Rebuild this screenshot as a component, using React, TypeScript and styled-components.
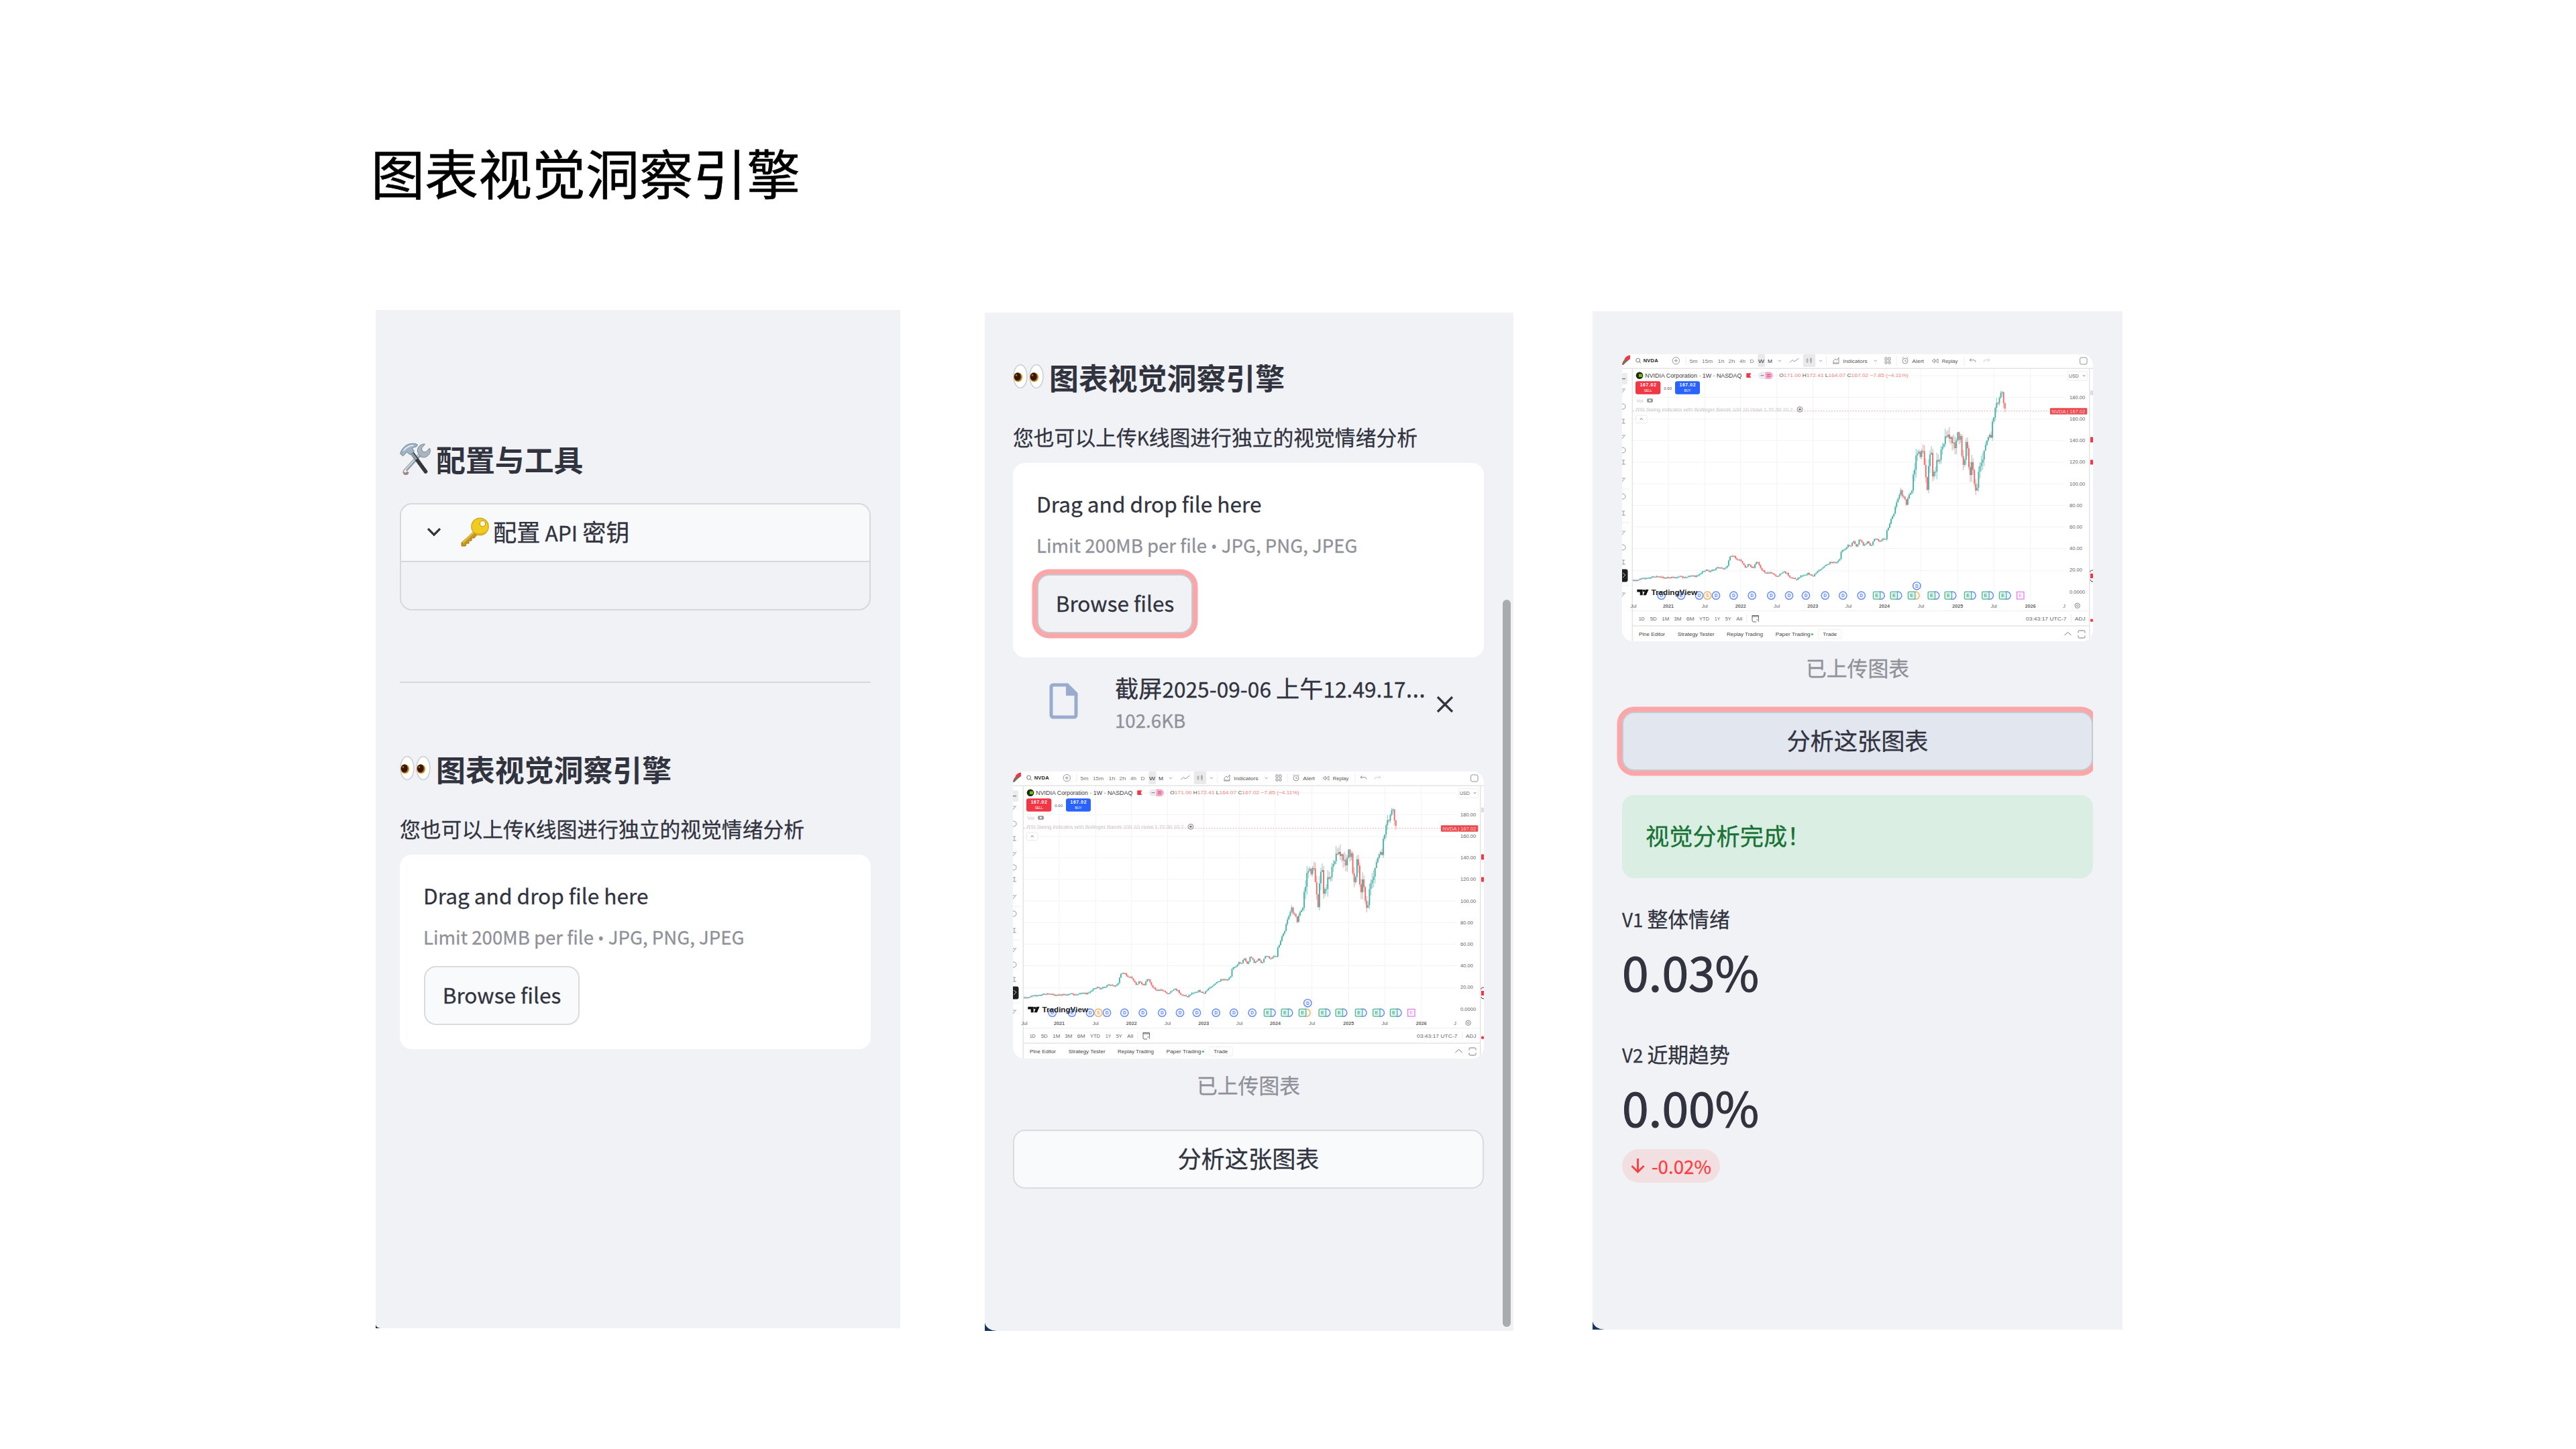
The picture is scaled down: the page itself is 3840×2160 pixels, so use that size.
import React from 'react';
import styled, { createGlobalStyle, css } from 'styled-components';

const GlobalStyle = createGlobalStyle`
  * { box-sizing: border-box; }
  body { margin: 0; background: #ffffff; }
`;

const ink = '#31333f';
const muted = '#909198';
const line = '#d6d8dc';

const Page = styled.main`
  width: 3840px;
  height: 2160px;
  padding-top: 215px;
  background: #ffffff;
  color: ${ink};
  font-family: 'Noto Sans CJK SC', 'Noto Sans', sans-serif;
  overflow: hidden;
`;

const Title = styled.h1`
  margin: 0 0 0 553px;
  height: 80px;
  line-height: 80px;
  font-size: 80px;
  font-weight: 400;
  color: #000000;
  -webkit-text-stroke: 0.6px #000000;
`;

const Panels = styled.div`
  display: flex;
  align-items: flex-start;
  padding: 167px 0 0 560px;
`;

const Panel = styled.section<{ $w: number; $h: number; $top: number; $gap: number; $pad: string }>`
  position: relative;
  flex: none;
  display: flex;
  flex-direction: column;
  width: ${p => p.$w}px;
  height: ${p => p.$h}px;
  margin-top: ${p => p.$top}px;
  margin-left: ${p => p.$gap}px;
  padding: ${p => p.$pad};
  background: #f0f2f6;
  -webkit-text-stroke: 0.3px currentColor;
`;

const Heading = styled.h2<{ $top?: number }>`
  display: flex;
  align-items: center;
  gap: 8px;
  width: 702px;
  height: 54px;
  margin: ${p => p.$top ?? 0}px 0 0;
  font-size: 43.9px;
  line-height: 54px;
  font-weight: 700;
  white-space: nowrap;
  -webkit-text-stroke: 0;
  svg { flex: none; }
`;

const Expander = styled.div`
  width: 702px;
  height: 160px;
  margin-top: 39px;
  border: 2px solid ${line};
  border-radius: 18px;
  overflow: hidden;
`;

const ExpanderHead = styled.div`
  display: flex;
  align-items: center;
  height: 86px;
  padding: 0 0 3px 38px;
  border-bottom: 2px solid ${line};
  background: #f8f9fb;
  font-size: 35.2px;
  line-height: 50px;
  white-space: nowrap;
`;

const KeySlot = styled.span`
  display: flex;
  margin: 0 6px 0 28px;
`;

const Latin = styled.span`
  font-size: 0.9em;
`;

const Bullet = styled.span`
  font-family: 'Open Sans', 'Noto Sans', sans-serif;
  font-size: 25px;
`;

const Ellipsis = styled.span`
  font-family: 'Open Sans', 'Noto Sans', sans-serif;
  font-size: 38px;
  line-height: 1;
`;

const Divider = styled.hr`
  width: 702px;
  height: 2px;
  margin: 106px 0 0;
  border: 0;
  background: ${line};
`;

const Description = styled.p`
  height: 44px;
  margin: 40px 0 0;
  font-size: 30.8px;
  line-height: 44px;
  white-space: nowrap;
`;

const DropZone = styled.div`
  flex: none;
  display: flex;
  flex-direction: column;
  align-items: flex-start;
  width: 702px;
  height: 290px;
  margin-top: 17px;
  padding: 36px 36px 0;
  border-radius: 18px;
  background: #ffffff;
  white-space: nowrap;
`;

const DropTitle = styled.div`
  margin-left: -1px;
  font-size: 31.6px;
  line-height: 48px;
`;

const DropHint = styled.div`
  margin: 20px 0 26px -1px;
  height: 36px;
  font-size: 27.6px;
  line-height: 36px;
  color: ${muted};
`;

const focusRing = css`
  border-color: #c5cad1;
  box-shadow: 0 0 0 7.5px #fba6a8;
`;

const Button = styled.button<{ $wide?: boolean; $focus?: boolean; $bg?: string; $top?: number }>`
  flex: none;
  width: ${p => (p.$wide ? 702 : 232)}px;
  height: 88px;
  margin: ${p => p.$top ?? 0}px 0 0;
  padding: 0 0 ${p => (p.$wide ? 4 : 5)}px;
  border: 2px solid #d9dbdf;
  border-radius: 18px;
  background: ${p => p.$bg ?? '#f9fafc'};
  color: ${ink};
  font-family: inherit;
  font-size: ${p => (p.$wide ? 35.2 : 31.6)}px;
  line-height: 50px;
  white-space: nowrap;
  ${p => p.$focus && focusRing}
`;

const RightClip = styled.div`
  flex: none;
  display: flex;
  width: 702px;
  margin-top: 46px;
  clip-path: inset(-10px 0 -10px -10px);
`;

const FileRow = styled.div`
  flex: none;
  display: flex;
  align-items: flex-start;
  width: 702px;
  height: 170px;
  padding-left: 54px;
`;

const FileGlyph = styled.svg`
  flex: none;
  margin-top: 38px;
`;

const FileText = styled.div`
  width: 479px;
  margin: 23px 0 0 54px;
  white-space: nowrap;
`;

const FileName = styled.div`
  height: 44px;
  font-size: 35.2px;
  line-height: 44px;
`;

const FileSize = styled.div`
  margin-top: 9px;
  font-size: 27.7px;
  line-height: 34px;
  color: ${muted};
`;

const CloseGlyph = styled.svg`
  flex: none;
  margin-top: 57px;
`;

const ChartFrame = styled.div`
  flex: none;
  width: 702px;
  height: 428px;
  border-radius: 17px;
  overflow: hidden;
  background: #ffffff;
  -webkit-text-stroke: 0;
  svg { display: block; }
`;

const Caption = styled.div`
  width: 702px;
  height: 40px;
  margin-top: 19px;
  font-size: 30.8px;
  line-height: 40px;
  text-align: center;
  color: ${muted};
`;

const Alert = styled.div`
  flex: none;
  display: flex;
  align-items: center;
  width: 702px;
  height: 124px;
  margin-top: 36px;
  padding: 0 35px 4px;
  border-radius: 18px;
  background: #daeee4;
  color: #177233;
  font-size: 35.2px;
  line-height: 50px;
`;

const MetricLabel = styled.div<{ $top: number }>`
  height: 40px;
  margin-top: ${p => p.$top}px;
  font-size: 30.8px;
  line-height: 40px;
`;

const MetricValue = styled.div`
  height: 90px;
  margin-top: 13px;
  font-size: 71.3px;
  line-height: 90px;
  -webkit-text-stroke: 1.1px currentColor;
`;

const Delta = styled.div`
  display: flex;
  align-items: center;
  align-self: flex-start;
  gap: 10px;
  height: 50px;
  margin-top: 19px;
  padding: 0 13px;
  border-radius: 25px;
  background: #f2dfe2;
  color: #ff3d40;
  font-size: 27.7px;
  line-height: 50px;
`;

const Scrollbar = styled.div`
  position: absolute;
  top: 428px;
  right: 4px;
  width: 12px;
  height: 1084px;
  border-radius: 6px;
  background: #a9abaf;
`;

const Corner = styled.svg`
  position: absolute;
  left: 0;
  bottom: 0;
`;

const Eyes = () => (
  <svg width="46" height="38" viewBox="0 0 46 38">
    {[0, 24].map(x => (
      <g key={x} transform={`translate(${x} -1)`}>
        <ellipse cx="11" cy="19" rx="10" ry="17.3" fill="#fff" stroke="#cfd0d2" strokeWidth="1.6" />
        <ellipse cx="7.6" cy="20.2" rx="6.4" ry="7" fill="#c58a1d" />
        <ellipse cx="6.8" cy="19.4" rx="5" ry="6" fill="#3a1408" />
        <circle cx="5" cy="17.5" r="1.4" fill="#8a6a5c" />
      </g>
    ))}
  </svg>
);

const Tools = () => (
  <svg width="46" height="48" viewBox="0 0 45 48">
    <path d="M30 17 L8 41" stroke="#8d9aa3" strokeWidth="5.5" strokeLinecap="round" />
    <path d="M29 17 L8 40" stroke="#c9d3da" strokeWidth="2.4" strokeLinecap="round" />
    <path d="M5 41 a4.5 4.5 0 1 0 8 3 z" fill="#a58488" />
    <circle cx="7.6" cy="42.4" r="2" fill="#f0f2f6" />
    <path d="M37 2 a10 10 0 0 0 -11 12 l5 7 a10 10 0 0 0 13 -13 l-6 6 l-5 -1 l-1 -5 z" fill="#a9b6bf" stroke="#7d8a93" strokeWidth="1" />
    <path d="M19 17 L38 43" stroke="#34373d" strokeWidth="5.6" strokeLinecap="round" />
    <path d="M15 13 L24 25" stroke="#8799a5" strokeWidth="4" />
    <path d="M0 16 q4 -11 13 -14 q9 -2 13 1 l-2 3 q-4 0 -6 2 l3 5 l-6 5 l-5 -4 l-6 6 z" fill="#9eb4c4" stroke="#6f8493" strokeWidth="1" />
    <path d="M5 12 q6 -8 15 -8" stroke="#dbe7ef" strokeWidth="2" fill="none" />
  </svg>
);

const KeyIcon = () => (
  <svg width="43" height="44" viewBox="0 0 43 44">
    <path d="M23 19 L2 38 L2 43 L8 43 L9 39 L13 39 L13 35 L17 35 L17 31 L21 31 L27 24 z" fill="#c8961a" stroke="#a87a10" strokeWidth="1" />
    <path d="M22 21 L4 38" stroke="#e9c33c" strokeWidth="2" />
    <circle cx="29.5" cy="14" r="12.7" fill="#f2cb1f" stroke="#cf9f16" strokeWidth="1.2" />
    <path d="M20 21 a12 12 0 0 0 20 -2 a14 14 0 0 1 -20 2z" fill="#d9a91a" />
    <circle cx="33.5" cy="9.5" r="4.3" fill="#fff8dd" stroke="#b98d17" strokeWidth="1" />
  </svg>
);

/* Price curve of the weekly chart: [x, y] turning points in chart pixels. */
const curve: [number, number][] = [
  [15, 338], [22, 337], [30, 333], [36, 334], [42, 333], [50, 331], [55, 332], [62, 333], [78, 333], [84, 331],
  [90, 333], [95, 333], [101, 329.5], [110, 332], [117, 326], [126, 321], [130, 324], [137, 321], [142, 317.5],
  [152, 321], [157, 314], [160, 303], [166, 300], [170, 306], [176, 307], [180, 313], [184, 318], [188, 313],
  [193, 317], [197, 318], [199, 310], [203, 310], [207, 320], [215, 327], [222, 325], [226, 328], [231, 331],
  [240, 324], [246, 327], [250, 332], [260, 335.5], [267, 330], [277, 327], [285, 331], [292, 323], [300, 317],
  [310, 311], [320, 311], [325, 305], [327, 292], [331, 291], [337, 285], [341, 285], [345, 278], [350, 288],
  [354, 275], [360, 285], [367, 279], [371, 288], [375, 277], [378, 274], [383, 280], [388, 275], [392.7, 275],
  [395, 262], [398, 256], [402, 241], [405, 238], [408, 223], [412, 213], [415, 204], [418, 210], [421, 211],
  [423, 229], [426, 213], [432, 205], [433.5, 182], [437, 167], [439, 143], [443, 153], [447, 140], [450, 158],
  [453, 181], [455.5, 203], [457.5, 160], [461, 143], [463, 187], [466, 178], [469, 163], [473, 155], [477, 130],
  [481, 132], [484, 114], [487, 124], [490, 128], [495, 141], [498, 124], [501, 115], [503, 141], [505, 124],
  [507.5, 164], [510, 160], [513, 128], [516, 150], [518, 179], [522, 160], [524, 177], [526.5, 200], [528.5, 210],
  [530.5, 180], [533, 174], [537, 165], [539, 138], [542, 136], [545, 125], [550, 123], [552, 101], [555, 96],
  [557, 77], [561, 72], [563, 60], [566, 59], [568, 66], [569.5, 78], [571, 86],
];

const valueAt = (x: number) => {
  const i = curve.findIndex(p => p[0] >= x);
  if (i <= 0) return curve[0][1];
  const [x0, y0] = curve[i - 1];
  const [x1, y1] = curve[i];
  return y0 + ((y1 - y0) * (x - x0)) / (x1 - x0);
};

const candles = (() => {
  const out: { x: number; o: number; c: number; h: number; l: number }[] = [];
  let prev = curve[0][1];
  let seed = 7;
  const rnd = () => {
    seed = (seed * 16807) % 2147483647;
    return seed / 2147483647;
  };
  for (let x = 16; x <= 571; x += 2.07) {
    const scale = Math.max(0.3, (345 - valueAt(x)) / 210);
    const choppy = x > 433 && x < 540 ? 2.2 : 1;
    const c = valueAt(x) + (rnd() - 0.5) * 7 * scale * choppy;
    out.push({
      x,
      o: prev,
      c,
      h: Math.min(prev, c) - rnd() * 6 * scale * choppy,
      l: Math.max(prev, c) + rnd() * 6 * scale * choppy,
    });
    prev = c;
  }
  return out;
})();

const gridX = [69, 123.3, 176.7, 230.7, 284.3, 337.7, 391, 445.7, 500.3, 554.3, 608.7];
const gridY = [32, 64.3, 96.7, 128.7, 161, 193, 225.3, 257.3, 289.5, 322.7];
const prices: [string, number][] = [
  ['180.00', 64], ['160.00', 96.7], ['140.00', 128.4], ['120.00', 160.7], ['100.00', 193],
  ['80.00', 225], ['60.00', 257.3], ['40.00', 289.4], ['20.00', 321.4], ['0.0000', 354],
];
const months: [string, number][] = [
  ['Jul', 17], ['2021', 69], ['Jul', 123.3], ['2022', 176.7], ['Jul', 230.7], ['2023', 284.3], ['Jul', 337.7],
  ['2024', 391], ['Jul', 445.7], ['2025', 500.3], ['Jul', 554.3], ['2026', 608.7], ['J', 659],
];
const intervals: [string, number, number][] = [
  ['5m', 100.5, 12], ['15m', 119, 16], ['1h', 142.5, 10], ['2h', 158.5, 10], ['4h', 175, 9], ['D', 190.5, 6], ['W', 203, 9], ['M', 217, 7],
];
const ranges: [string, number, number][] = [
  ['1D', 24.7, 9], ['5D', 41.7, 10], ['1M', 59.3, 11], ['3M', 77.3, 11], ['6M', 95.7, 12], ['YTD', 115, 15], ['1Y', 138, 8], ['5Y', 153.7, 9], ['All', 170.3, 9],
];
const tabs: [string, number, number][] = [
  ['Pine Editor', 25, 39], ['Strategy Tester', 82.7, 55], ['Replay Trading', 156, 54], ['Paper Trading', 228.7, 52], ['Trade', 299.3, 21],
];
const dividends = [58.7, 88, 115, 140, 166.3, 193.7, 222.3, 249, 274, 302.7, 329.3, 356.7];
const earnings = [380, 405.7, 432, 461.7, 486.7, 516, 542.3, 568];
const sideTools = [54, 78, 100, 123, 143, 161, 187, 212, 237, 266, 288, 310, 358];

const Event = ({ x, y = 359.7, color = '#5f88f8', label = 'D' }: { x: number; y?: number; color?: string; label?: string }) => (
  <g>
    <circle cx={x} cy={y} r="5.7" fill="#f3f6ff" stroke={color} strokeWidth="1.4" />
    <text x={x} y={y + 2.5} fontSize="6.5" fontWeight="700" textAnchor="middle" fill={color}>{label}</text>
  </g>
);

const TradingChart = () => (
  <ChartFrame>
    <svg width="702" height="428" viewBox="0 0 702 428" fontFamily="'Liberation Sans', Arial, sans-serif" fill="none">
      <rect width="702" height="428" fill="#fff" />
      <g stroke="#f3f3f4" strokeWidth="1">
        {gridX.map(x => <path key={x} d={`M${x} 22V366`} />)}
        {gridY.map(y => <path key={y} d={`M16 ${y}H661`} />)}
      </g>
      <path d="M16 84.7H638" stroke="#f79a9d" strokeWidth="1" strokeDasharray="1.4 2.6" />

      {candles.map((k, i) => {
        const color = k.c <= k.o ? '#26a69a' : '#ef5350';
        return (
          <g key={i}>
            <path d={`M${k.x} ${k.h}V${k.l}`} stroke={color} strokeWidth="0.8" opacity="0.7" />
            <rect x={k.x - 0.95} y={Math.min(k.o, k.c)} width="1.9" height={Math.max(1.4, Math.abs(k.o - k.c))} fill={color} opacity="0.8" />
          </g>
        );
      })}

      <g stroke="#e3e4e6" strokeWidth="1.6">
        <path d="M0 21.2H702M15.3 21V428M696.7 21V428M15.3 405H697" />
        <path d="M16 382.7H696" strokeWidth="0.6" />
      </g>

      {/* top toolbar */}
      <path d="M0 13L6 4L12 2V7L6 12L2 16H0z" fill="#8a6a55" />
      <path d="M3 6L7 2.5L12 1.5V7L8 9z" fill="#f23645" />
      <circle cx="23.6" cy="9" r="2.9" stroke="#777" strokeWidth="1" />
      <path d="M25.8 11L28 13.4" stroke="#777" />
      <g fill="#555" fontSize="8">
        <text x="31.7" y="12.3" fontSize="7.6" fontWeight="700" textLength="22" fill="#222">NVDA</text>
        <rect x="202.3" y="0" width="11" height="19" rx="2" fill="#e9e9eb" />
        <rect x="269.7" y="0" width="18.5" height="19" rx="2" fill="#e9e9eb" />
        {intervals.map(([t, x, w]) => (
          <text key={t} x={x} y="12.6" textLength={w} lengthAdjust="spacingAndGlyphs" fill={t === 'W' || t === 'M' ? '#333' : '#777'}>{t}</text>
        ))}
        <text x="329.3" y="12.6" textLength="36.5" lengthAdjust="spacingAndGlyphs">Indicators</text>
        <text x="432.3" y="12.6" textLength="17.7" lengthAdjust="spacingAndGlyphs">Alert</text>
        <text x="476.7" y="12.6" textLength="23.7" lengthAdjust="spacingAndGlyphs">Replay</text>
      </g>
      <g stroke="#888" strokeWidth="0.9">
        <circle cx="80.3" cy="9.7" r="5.2" />
        <path d="M77.8 9.7h5M80.3 7.2v5" />
        <path d="M233 8.8l2 2 2-2M294 8.8l2 2 2-2M375.7 8.8l2 2 2-2" />
        <path d="M250 12.5l4-4 3 2.5 6.5-5" />
        <g stroke="#aaa">
          <path d="M276 6v7M275 7.5h2v4h-2zM281.5 5v9M280.5 6.5h2v5h-2z" />
        </g>
        <path d="M314 14h9.5M315 13V10l3-3 2 2 3-4v8zM392 5h3v4h-3zM397 5h3v4h-3zM392 11h3v3h-3zM397 11h3v3h-3z" />
        <circle cx="422" cy="10" r="4" /><path d="M422 8v2.4h2M417.5 6l2-1.7M426.5 6l-2-1.7" />
        <path d="M466 7l-4 3 4 3zM471 7l-4 3 4 3z" />
        <path d="M520.5 6.5L518 8.7l2.5 2.2M518 8.7h6q3 0 3 3" />
        <path d="M545.5 6.5L548 8.7l-2.5 2.2M548 8.7h-6q-3 0-3 3" stroke="#ccc" />
        <rect x="682.6" y="5" width="10.4" height="10" rx="2" />
      </g>
      <path d="M95 3v14M304.5 3v14M409 3v14M510 3v14" stroke="#e8e8ea" strokeWidth="0.8" />

      {/* symbol legend */}
      <circle cx="26" cy="31.7" r="5.3" fill="#1d2b12" />
      <path d="M25 29.5h5v4.4h-5z" fill="#76b900" />
      <text x="34.3" y="34.8" fontSize="8.6" fill="#444" textLength="144" lengthAdjust="spacingAndGlyphs">NVIDIA Corporation · 1W · NASDAQ</text>
      <path d="M185.3 28.3h7l-1.8 3.4 1.8 3.4h-7z" fill="#f23645" />
      <path d="M208 26.5h6v10.4h-6a5.2 5.2 0 0 1 0-10.4z" fill="#ececee" />
      <path d="M213.6 26.5h6a5.2 5.2 0 0 1 0 10.4h-6z" fill="#f5a8c6" />
      <path d="M206.5 31.7h5" stroke="#777" /><path d="M216 30.5h5M216 33h5" stroke="#c2387a" strokeWidth="0.9" />
      <text x="234.3" y="34.3" fontSize="7.6" fill="#f58583" textLength="192.5" lengthAdjust="spacingAndGlyphs">
        <tspan fill="#555">O</tspan>171.00 <tspan fill="#555">H</tspan>172.41 <tspan fill="#555">L</tspan>164.07 <tspan fill="#555">C</tspan>167.02 −7.85 (−4.11%)
      </text>
      <rect x="20" y="40.3" width="37.3" height="19.5" rx="3.2" fill="#f23645" />
      <rect x="79" y="40.3" width="37" height="19.5" rx="3.2" fill="#2962ff" />
      <g fill="#fff" textAnchor="middle" fontWeight="700">
        <text x="38.7" y="48.4" fontSize="6.8" textLength="24">167.02</text>
        <text x="97.5" y="48.4" fontSize="6.8" textLength="24">167.02</text>
        <text x="38.7" y="56" fontSize="4.8" fontWeight="400">SELL</text>
        <text x="97.5" y="56" fontSize="4.8" fontWeight="400">BUY</text>
      </g>
      <text x="62.3" y="52.6" fontSize="6" fill="#555">0.00</text>
      <text x="21.3" y="71.7" fontSize="7.4" fill="#c4c4c8">Vol</text>
      <rect x="37" y="66" width="9" height="6" rx="2" fill="#999" />
      <circle cx="41.5" cy="69" r="1.4" fill="#fff" />
      <text x="20.7" y="85" fontSize="7.2" fill="#c8c9cc" textLength="234" lengthAdjust="spacingAndGlyphs">RSI Swing Indicator with Bollinger Bands 100 10 close 1 70 30 10 2</text>
      <circle cx="265" cy="82.3" r="4" fill="#e6e6e8" stroke="#888" strokeWidth="0.9" />
      <circle cx="265" cy="82.3" r="1.4" fill="#666" />
      <rect x="20.5" y="91" width="16.5" height="11.7" rx="2" fill="#fff" stroke="#e3e4e6" strokeWidth="0.8" />
      <path d="M26.7 97.6l2-1.8 2 1.8" stroke="#555" strokeWidth="0.9" />

      {/* price axis */}
      <rect x="664.3" y="25.3" width="29" height="14" rx="2" fill="#fff" stroke="#e8e8ea" strokeWidth="0.8" />
      <text x="666" y="34.7" fontSize="7" fill="#666">USD</text>
      <path d="M687 31.3l1.6 1.6 1.6-1.6" stroke="#555" strokeWidth="0.9" />
      {prices.map(([t, y]) => (
        <text key={t} x="667" y={y + 2.5} fontSize="7.2" fill="#666" textLength={t.length > 5 ? 23.3 : 19} lengthAdjust="spacingAndGlyphs">{t}</text>
      ))}
      <rect x="638" y="80.2" width="55.3" height="9.6" rx="1" fill="#ea4a4e" />
      <text x="640.5" y="87.5" fontSize="6.6" fill="#fbd0d1" textLength="50" lengthAdjust="spacingAndGlyphs">NVDA | 167.02</text>
      <g fill="#f23645">
        <rect x="698" y="123.5" width="4" height="8" /><rect x="698" y="157.5" width="4" height="7" />
        <rect x="698" y="327" width="4" height="7" /><circle cx="700" cy="396.8" r="2.2" />
      </g>
      <rect x="698" y="54" width="4" height="7" fill="#ddd" />
      <path d="M702 322q-5 0-4 3M698 336q0 3 4 3" stroke="#444" />

      {/* drawing tools */}
      <rect x="0" y="28" width="8" height="17" rx="2" fill="#ececee" />
      <path d="M0 36.7h5" stroke="#555" />
      <g stroke="#999" strokeWidth="1">
        {sideTools.map((y, i) => (
          i % 3 === 0 ? <path key={y} d={`M0 ${y + 3}l5-6M0 ${y - 2}h3`} />
            : i % 3 === 1 ? <path key={y} d={`M0 ${y - 4}q5 0 5 4t-5 4`} />
              : <path key={y} d={`M0 ${y - 3}h4M0 ${y + 3}h5M2 ${y - 3}v6`} />
        ))}
      </g>
      <path d="M0 320.5h5.5a3 3 0 0 1 3 3v13a3 3 0 0 1-3 3H0z" fill="#1e1e20" />
      <path d="M1 326l4 3-4 4" stroke="#bbb" />
      <path d="M0 201h11M0 251h11M0 345h11" stroke="#e8e8ea" strokeWidth="0.8" />

      {/* events */}
      {dividends.map((x, i) => <Event key={x} x={x} label={i === 1 ? 'E' : 'D'} />)}
      <Event x={127.3} color="#f7b04f" label="S" />
      <Event x={439.3} y={345.3} />
      {earnings.map((x, i) => (
        <g key={x}>
          <Event x={x + 5.5} color={i === 2 ? '#f7b04f' : '#5f88f8'} label="" />
          <rect x={x - 5.6} y="354.2" width="10.4" height="11" rx="1.6" fill="#e3f4ee" stroke="#4fb496" strokeWidth="1.3" />
          <text x={x - 0.4} y="362.3" fontSize="7" fontWeight="700" textAnchor="middle" fill="#4fb496">E</text>
        </g>
      ))}
      <rect x="588.6" y="354.4" width="10.4" height="10.6" fill="#fff" stroke="#e57bf2" strokeWidth="1.3" />
      <text x="593.8" y="362.3" fontSize="7" textAnchor="middle" fill="#e57bf2">E</text>

      <path d="M22.3 350.7h8.4v8.6h-4v-4.8h-4.4z" fill="#111" />
      <path d="M35 350.7h4.6l-3.8 8.6h-4.4z" fill="#111" />
      <circle cx="32.6" cy="352.6" r="1.8" fill="#111" />
      <text x="43.5" y="358.6" fontSize="11.4" fontWeight="700" fill="#222" textLength="68.5" lengthAdjust="spacingAndGlyphs">TradingView</text>

      {/* time axis */}
      {months.map(([t, x]) => (
        <text key={x} x={x} y="377.6" fontSize="7.2" fontWeight={t.length > 3 ? 700 : 400} textAnchor="middle" fill="#666">{t}</text>
      ))}
      <circle cx="678.7" cy="374.8" r="3.7" stroke="#777" strokeWidth="0.9" />
      <circle cx="678.7" cy="374.8" r="1.4" stroke="#777" strokeWidth="0.8" />

      {/* ranges */}
      {ranges.map(([t, x, w]) => (
        <text key={t} x={x} y="397" fontSize="7.8" fill="#666" textLength={w} lengthAdjust="spacingAndGlyphs">{t}</text>
      ))}
      <path d="M186 388v12M669.5 388v12" stroke="#e8e8ea" strokeWidth="0.8" />
      <path d="M194 389.5h9.5v6M194 389v8q0 2 2 2h4M194 391h9.5" stroke="#666" />
      <path d="M200 396l3.5 0v3" stroke="#666" strokeWidth="0.8" />
      <text x="602" y="396.6" fontSize="7.8" fill="#666" textLength="60.5" lengthAdjust="spacingAndGlyphs">03:43:17 UTC-7</text>
      <text x="675" y="396.6" fontSize="7.8" fill="#666" textLength="15.5" lengthAdjust="spacingAndGlyphs">ADJ</text>

      {/* bottom tabs */}
      <rect x="292.7" y="410.5" width="34.5" height="13.5" rx="2" fill="#fff" stroke="#ececee" strokeWidth="0.8" />
      {tabs.map(([t, x, w]) => (
        <text key={t} x={x} y="420.3" fontSize="7.8" fill="#444" textLength={w} lengthAdjust="spacingAndGlyphs">{t}</text>
      ))}
      <circle cx="283.4" cy="417.5" r="1.6" fill="#35c759" />
      <path d="M659.5 419l5-4.5 5 4.5" stroke="#777" />
      <path d="M680 415.5v-2q0-1.5 1.5-1.5h7q1.5 0 1.5 1.5v2M680 419.5v2q0 1.5 1.5 1.5h7q1.5 0 1.5-1.5v-2" stroke="#777" />
    </svg>
  </ChartFrame>
);

const Uploader = ({ focused }: { focused?: boolean }) => (
  <DropZone>
    <DropTitle>Drag and drop file here</DropTitle>
    <DropHint>Limit 200MB per file <Bullet>•</Bullet> JPG, PNG, JPEG</DropHint>
    <Button $focus={focused} $bg={focused ? '#f0f2f6' : undefined}>Browse files</Button>
  </DropZone>
);

const EngineIntro = ({ top }: { top?: number }) => (
  <>
    <Heading $top={top}><Eyes />图表视觉洞察引擎</Heading>
    <Description>您也可以上传<Latin>K</Latin>线图进行独立的视觉情绪分析</Description>
  </>
);

const DarkCorner = ({ size }: { size: number }) => (
  <Corner width={size * 1.5} height={size} viewBox="0 0 18 12" preserveAspectRatio="none">
    <path d="M0 0Q3 11 18 12H0z" fill="#12355b" />
  </Corner>
);

export default function App() {
  return (
    <Page>
      <GlobalStyle />
      <Title>图表视觉洞察引擎</Title>
      <Panels>
        <Panel $w={782} $h={1518} $top={0} $gap={0} $pad="195px 0 0 36px">
          <Heading><Tools />配置与工具</Heading>
          <Expander>
            <ExpanderHead>
              <svg width="22" height="14" viewBox="0 0 22 14"><path d="M2 2.2l9 9 9-9" fill="none" stroke={ink} strokeWidth="3.2" /></svg>
              <KeySlot><KeyIcon /></KeySlot>
              <span>配置<Latin> API </Latin>密钥</span>
            </ExpanderHead>
          </Expander>
          <Divider />
          <EngineIntro top={101} />
          <Uploader />
          <DarkCorner size={5} />
        </Panel>

        <Panel $w={788} $h={1518} $top={4} $gap={126} $pad="69px 0 0 42px">
          <EngineIntro />
          <Uploader focused />
          <FileRow>
            <FileGlyph width="44" height="54" viewBox="0 0 44 54">
              <path d="M6 3h21l13 13v32a3 3 0 0 1-3 3H6a3 3 0 0 1-3-3V6a3 3 0 0 1 3-3z" fill="none" stroke="#99abcf" strokeWidth="5" />
              <path d="M25 1l18 18H25z" fill="#99abcf" />
            </FileGlyph>
            <FileText>
              <FileName>截屏<Latin>2025-09-06 </Latin>上午<Latin>12.49.17</Latin><Ellipsis>…</Ellipsis></FileName>
              <FileSize>102.6KB</FileSize>
            </FileText>
            <CloseGlyph width="26" height="26" viewBox="0 0 26 26">
              <path d="M2 2l22 22M24 2L2 24" stroke={ink} strokeWidth="3.2" />
            </CloseGlyph>
          </FileRow>
          <TradingChart />
          <Caption>已上传图表</Caption>
          <Button $wide $top={47}>分析这张图表</Button>
          <Scrollbar />
          <DarkCorner size={12} />
        </Panel>

        <Panel $w={790} $h={1518} $top={2} $gap={118} $pad="64px 0 0 44px">
          <TradingChart />
          <Caption>已上传图表</Caption>
          <RightClip>
            <Button $wide $focus $bg="#e2e6ef">分析这张图表</Button>
          </RightClip>
          <Alert>视觉分析完成！</Alert>
          <MetricLabel $top={40}><Latin>V1 </Latin>整体情绪</MetricLabel>
          <MetricValue>0.03%</MetricValue>
          <MetricLabel $top={59}><Latin>V2 </Latin>近期趋势</MetricLabel>
          <MetricValue>0.00%</MetricValue>
          <Delta>
            <svg width="21" height="22" viewBox="0 0 21 22"><path d="M10.5 0v20M1.5 11l9 9 9-9" fill="none" stroke="currentColor" strokeWidth="2.8" /></svg>
            -0.02%
          </Delta>
          <DarkCorner size={12} />
        </Panel>
      </Panels>
    </Page>
  );
}
